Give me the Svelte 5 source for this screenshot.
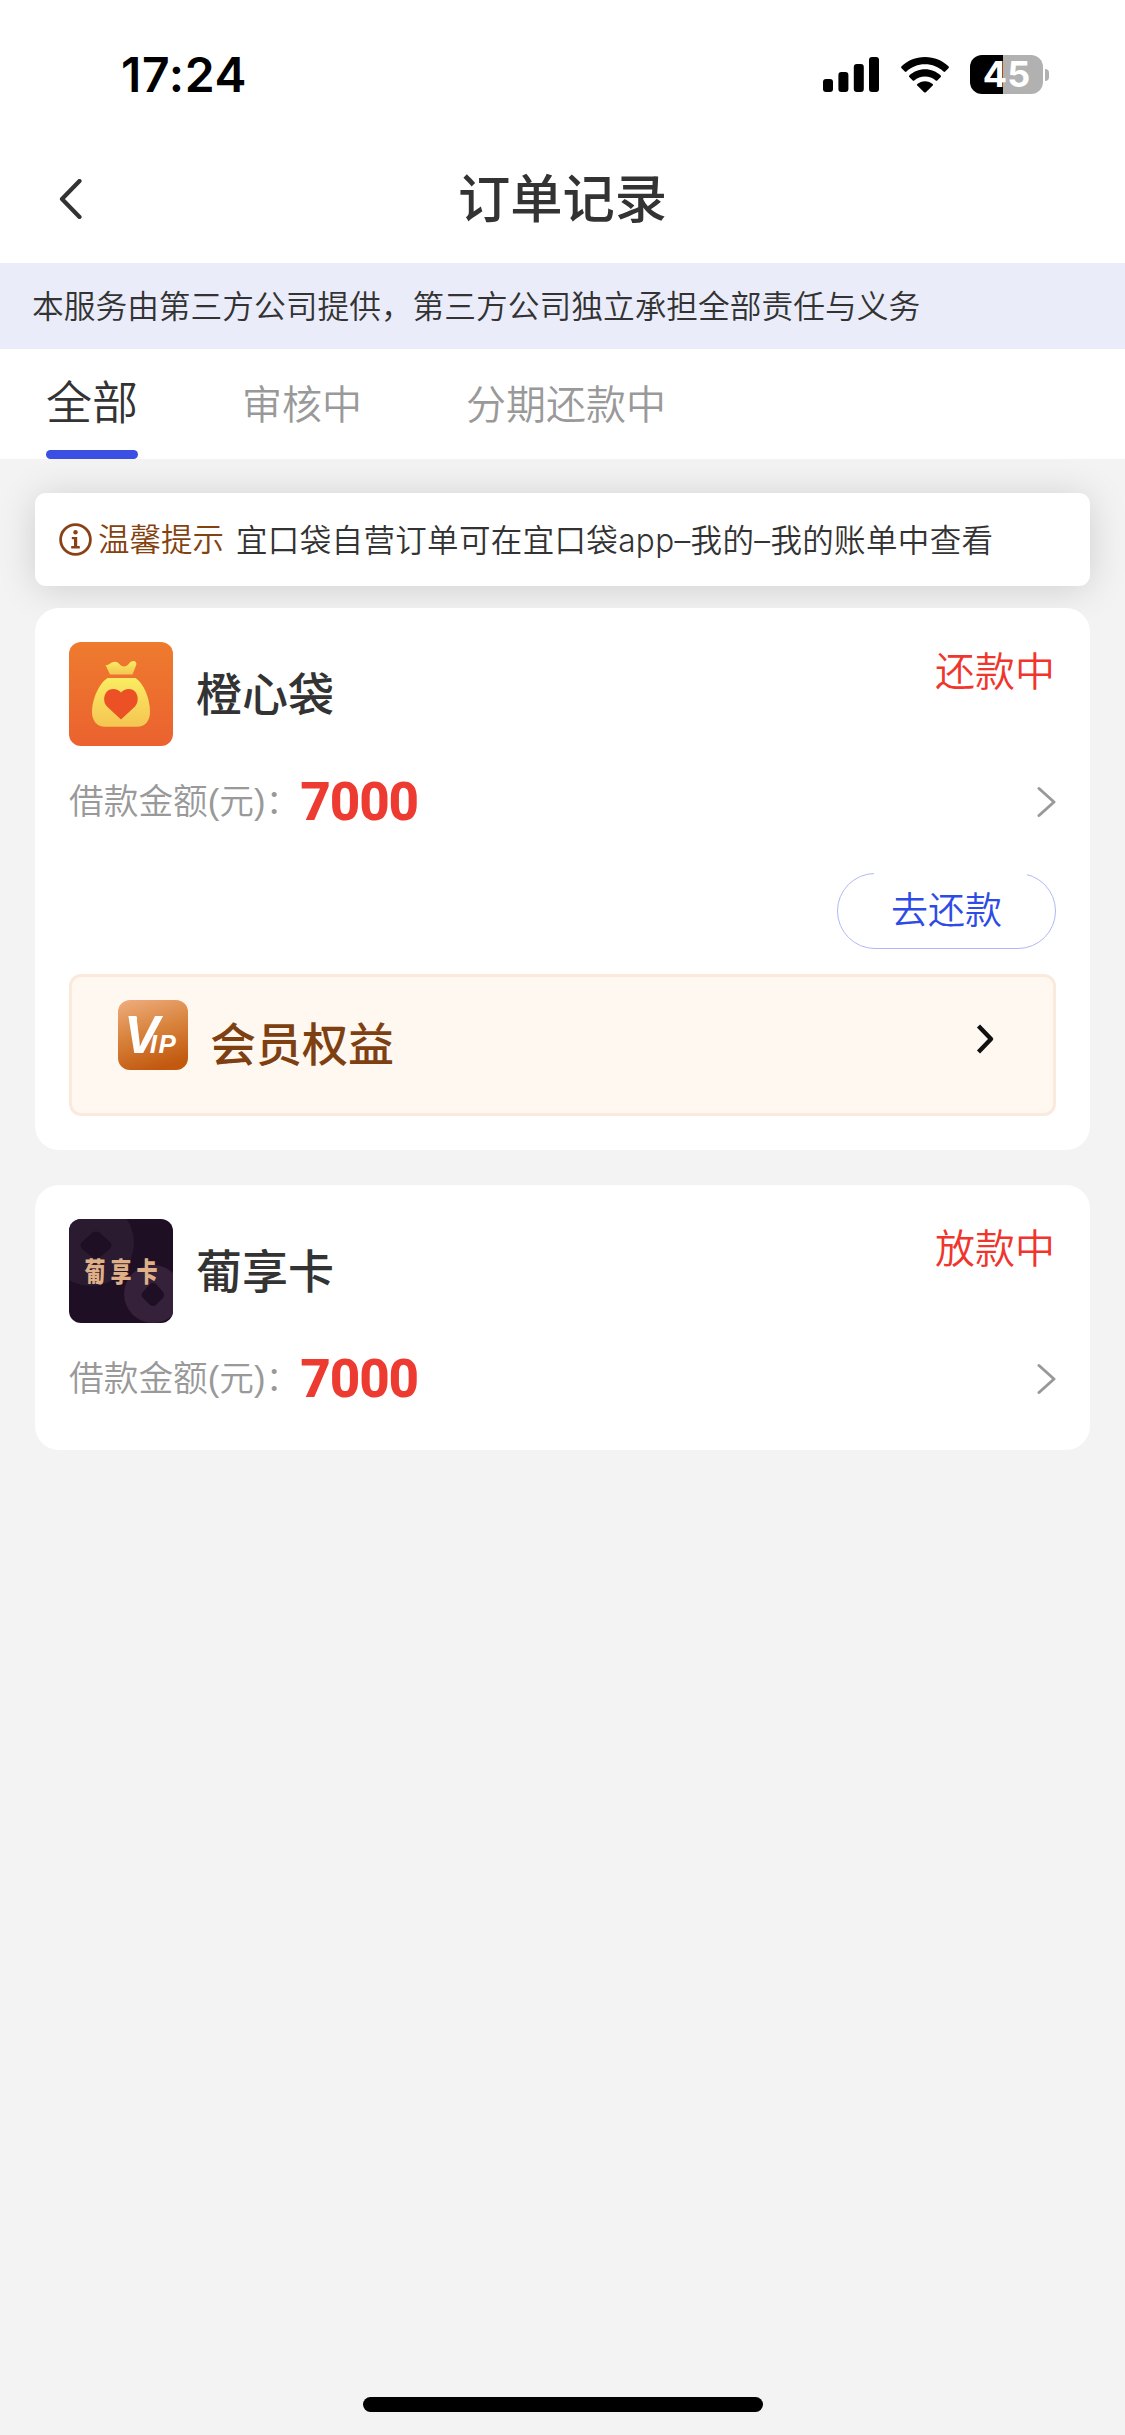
<script>
  let tabs = ['全部', '审核中', '分期还款中'];
  let activeTab = 0;

  let orders = [
    { name: '橙心袋', logo: 'bag', status: '还款中', amount: 7000, canRepay: true },
    { name: '葡享卡', logo: 'card', status: '放款中', amount: 7000, canRepay: false }
  ];
</script>

<div class="page">
  <div class="status-bar">
    <span class="time">17:24</span>
    <div class="status-icons">
      <svg class="signal" width="56" height="35" viewBox="0 0 56 35">
        <rect x="0" y="22" width="10" height="13" rx="3" />
        <rect x="15.4" y="15" width="10" height="20" rx="3" />
        <rect x="30.8" y="7" width="10" height="28" rx="3" />
        <rect x="46" y="0" width="10" height="35" rx="3" />
      </svg>
      <svg class="wifi" width="48" height="36" viewBox="0 0 48 36">
        <path d="M24 0C33.500 0 41.500 3.600 47.400 9.300Q48.400 10.300 47.400 11.300L44.200 14.500Q43.400 15.300 42.500 14.500C37.600 9.900 31.200 7.300 24 7.300S10.400 9.900 5.500 14.500Q4.600 15.300 3.800 14.500L.6 11.300Q-.4 10.300 .6 9.300C6.500 3.600 14.500 0 24 0Z" />
        <path d="M24 12.300C30.200 12.300 35.600 14.700 39.700 18.500Q40.500 19.300 39.700 20.100L36.300 23.500Q35.500 24.200 34.700 23.500C31.800 20.900 28.200 19.400 24 19.400S16.200 20.900 13.300 23.500Q12.500 24.200 11.700 23.500L8.300 20.100Q7.500 19.300 8.300 18.500C12.400 14.700 17.800 12.300 24 12.300Z" />
        <path d="M24 24.200C27 24.200 29.600 25.300 31.700 27Q32.500 27.700 31.700 28.500L24.900 35.200Q24 36 23.100 35.200L16.300 28.500Q15.500 27.700 16.300 27C18.400 25.300 21 24.200 24 24.200Z" />
      </svg>
      <div class="battery">
        <span>45</span>
      </div>
      <div class="battery-cap"></div>
    </div>
  </div>

  <header class="nav">
    <button class="back" aria-label="返回">
      <svg width="24" height="40" viewBox="0 0 24 40">
        <path d="M20.500 2L3 20L20.500 38" fill="none" stroke="#333" stroke-width="4.200" stroke-linecap="round" stroke-linejoin="round" />
      </svg>
    </button>
    <h1>订单记录</h1>
  </header>

  <div class="notice">本服务由第三方公司提供，第三方公司独立承担全部责任与义务</div>

  <nav class="tabs">
    {#each tabs as tab, i}
      <button class="tab" class:active={i === activeTab} on:click={() => (activeTab = i)}>{tab}</button>
    {/each}
  </nav>

  <main>
    <div class="tips">
      <svg width="33" height="33" viewBox="0 0 33 33">
        <circle cx="16.500" cy="16.500" r="14.900" fill="none" stroke="#8a4116" stroke-width="2.800" />
        <circle cx="16.500" cy="9.200" r="2.200" fill="#8a4116" />
        <path d="M12.800 14H18.200V23H20.800V25.400H12.200V23H15V16.200H12.800Z" fill="#8a4116" />
      </svg>
      <span class="tips-title">温馨提示</span>
      <span class="tips-text">宜口袋自营订单可在宜口袋app–我的–我的账单中查看</span>
    </div>

    {#each orders as order}
      <section class="card">
        <div class="card-head">
          {#if order.logo === 'bag'}
            <svg class="logo" width="104" height="104" viewBox="0 0 104 104">
              <defs>
                <linearGradient id="bagBg" x1="0" y1="0" x2="0" y2="1">
                  <stop offset="0" stop-color="#ee7b2e" />
                  <stop offset="1" stop-color="#eb622f" />
                </linearGradient>
                <linearGradient id="bagFill" x1="0" y1="0" x2="0" y2="1">
                  <stop offset="0" stop-color="#faec62" />
                  <stop offset="1" stop-color="#f4c552" />
                </linearGradient>
              </defs>
              <rect width="104" height="104" fill="url(#bagBg)" />
              <path d="M36.500 23C40 24 41.500 19.800 46 19.800C50 19.800 51 24.500 55 24.500C59.500 24.500 60 19 64.500 19C67 19 68 21.500 67 23.500L63.500 32.500H41Z" fill="url(#bagFill)" />
              <path d="M38.500 36H66.500C75 41.500 81 57 81 70C81 79 76 84.700 68 84.700H36C28 84.700 23 79 23 70C23 57 30 41.500 38.500 36Z" fill="url(#bagFill)" />
              <path d="M52 77.500L38 64.500C32.500 58.500 35.500 47 44 47C47.500 47 50.500 48.600 52 50.500C53.500 48.600 56.500 47 60 47C68.500 47 71.500 58.500 66 64.500Z" fill="#ec5125" />
            </svg>
          {:else}
            <svg class="logo" width="104" height="104" viewBox="0 0 104 104">
              <rect width="104" height="104" fill="#1e0f25" />
              <circle cx="22" cy="24" r="43" fill="#2b1b31" />
              <circle cx="84" cy="75" r="29" fill="#35213a" />
              <path d="M23 14Q27 11 31 14L41 23Q44 26 41 30L31 38Q27 41 23 38L13 30Q10 26 13 23Z" fill="#1e0f25" />
              <path d="M81 65Q84 63 87 65L94 73Q96 76 94 79L87 86Q84 88 81 86L74 79Q71 76 74 73Z" fill="#1e0f25" />
              <g transform="scale(1 1.320)">
                <text class="logo-text" x="15.500" y="47.500" textLength="73">葡享卡</text>
              </g>
            </svg>
          {/if}
          <h2>{order.name}</h2>
          <span class="status">{order.status}</span>
        </div>

        <div class="amount-row">
          <span class="label">借款金额(元)：</span>
          <span class="amount">{order.amount}</span>
          <svg class="arrow" width="20" height="32" viewBox="0 0 20 32">
            <path d="M3 2.500L18 16L3 29.500" fill="none" stroke="#999" stroke-width="3" stroke-linecap="round" stroke-linejoin="round" />
          </svg>
        </div>

        {#if order.canRepay}
          <button class="repay">去还款</button>
          <div class="vip">
            <svg class="vip-icon" width="70" height="70" viewBox="0 0 70 70">
              <defs>
                <linearGradient id="vipBg" x1="0.200" y1="0" x2="0.500" y2="1">
                  <stop offset="0" stop-color="#eda978" />
                  <stop offset="0.450" stop-color="#d9853f" />
                  <stop offset="1" stop-color="#c2590f" />
                </linearGradient>
              </defs>
              <rect width="70" height="70" rx="12" fill="url(#vipBg)" />
              <rect x="11" y="17" width="8" height="3" fill="#fff" />
              <text class="vip-mark" x="6" y="53.300">V<tspan class="vip-small" dx="-9.500">IP</tspan></text>
            </svg>
            <span class="vip-title">会员权益</span>
            <svg class="vip-arrow" width="20" height="32" viewBox="0 0 20 32">
              <path d="M3.500 3L16 16L3.500 29" fill="none" stroke="#111" stroke-width="4.400" stroke-linejoin="round" />
            </svg>
          </div>
        {/if}
      </section>
    {/each}
  </main>

  <div class="home-bar"></div>
</div>

<style>
  :global(body) {
    margin: 0;
    background: #f3f3f3;
  }

  .page {
    display: flex;
    flex-direction: column;
    width: 1125px;
    height: 2435px;
    background: #f3f3f3;
    color: #333;
    font-family: "Liberation Sans", "Noto Sans CJK SC", sans-serif;
    font-weight: 350;
    line-height: 1;
    overflow: hidden;
  }

  button {
    border: none;
    background: none;
    padding: 0;
    font-family: inherit;
    font-weight: inherit;
    cursor: pointer;
  }

  h1,
  h2 {
    margin: 0;
    font-weight: 500;
  }

  .status-bar {
    display: flex;
    align-items: center;
    justify-content: space-between;
    box-sizing: border-box;
    height: 138px;
    padding: 11px 76px 0 121px;
    background: #fff;
    color: #000;
  }

  .time {
    font-family: Inter, sans-serif;
    font-size: 48px;
    font-weight: 600;
    letter-spacing: 0.7px;
  }

  .status-icons {
    display: flex;
    align-items: center;
  }

  .wifi {
    margin: 0 21px 0 22px;
  }

  .battery {
    width: 73px;
    height: 39px;
    border-radius: 12px;
    background: linear-gradient(90deg, #000 33px, #b1b1b1 33px);
    color: #fff;
    font-family: Inter, sans-serif;
    font-size: 36px;
    font-weight: 700;
    line-height: 39px;
    text-align: center;
  }

  .battery-cap {
    width: 4px;
    height: 12px;
    margin-left: 2px;
    border-radius: 0 6px 6px 0;
    background: #b1b1b1;
  }

  .nav {
    display: grid;
    grid-template-columns: 100px 1fr 100px;
    align-items: center;
    height: 125px;
    background: #fff;
  }

  .back {
    display: flex;
    padding: 0 0 3px 59px;
  }

  h1 {
    font-size: 52.3px;
    text-align: center;
  }

  .notice {
    height: 84px;
    padding: 2px 0 0 32px;
    background: #eaecf9;
    font-size: 31.72px;
    line-height: 84px;
    white-space: nowrap;
  }

  .tabs {
    display: flex;
    gap: 104px;
    height: 110px;
    padding-left: 46px;
    background: #fff;
  }

  .tab {
    padding-top: 2px;
    color: #999;
    font-size: 40px;
    line-height: 108px;
  }

  .tab.active {
    padding-top: 0;
    color: #333;
    font-size: 46px;
  }

  .tab.active::after {
    content: '';
    display: block;
    height: 9px;
    margin-top: -7px;
    border-radius: 5px;
    background: #3b50e2;
  }

  main {
    flex: 1;
    padding: 34px 35px 0;
  }

  .tips {
    display: flex;
    align-items: center;
    height: 93px;
    margin-bottom: 22px;
    padding-left: 24px;
    border-radius: 11px;
    background: #fff;
    box-shadow: 0 3px 38px rgba(0, 0, 0, 0.15);
    font-size: 31.5px;
    white-space: nowrap;
  }

  .tips-title {
    margin: 2px 0 0 6px;
    color: #84420f;
  }

  .tips-text {
    margin: 2px 0 0 12px;
    font-family: Inter, "Noto Sans CJK SC", sans-serif;
    letter-spacing: 0.35px;
  }

  .card {
    display: flex;
    flex-direction: column;
    margin-bottom: 35px;
    padding: 34px;
    border-radius: 24px;
    background: #fff;
  }

  /* keeps the tips shadow behind the first card */
  .tips + .card {
    position: relative;
  }

  .card-head {
    display: flex;
    align-items: center;
    height: 104px;
  }

  .logo {
    border-radius: 12px;
  }

  .logo-text {
    fill: #dfb088;
    font-family: "Noto Sans CJK SC", sans-serif;
    font-size: 21px;
    font-weight: 900;
  }

  h2 {
    margin: 2px 0 0 23px;
    font-size: 46px;
  }

  .status {
    align-self: flex-start;
    margin: 0 1px 0 auto;
    color: #f0352d;
    font-size: 40px;
    line-height: 61px;
  }

  .amount-row {
    display: flex;
    align-items: center;
    height: 74px;
    margin-top: 19px;
  }

  .label {
    color: #999;
    font-size: 34.7px;
  }

  .amount {
    color: #ed3b31;
    font-family: Roboto, sans-serif;
    font-size: 53px;
    font-weight: 800;
    letter-spacing: -1.1px;
  }

  .arrow {
    margin-left: auto;
  }

  .repay {
    position: relative;
    align-self: flex-end;
    box-sizing: border-box;
    width: 219px;
    height: 76px;
    margin-top: 34px;
    padding-bottom: 6px;
    border: 1px solid #b0b8f6;
    border-radius: 38px;
    color: #2f4be6;
    font-size: 37px;
  }

  .repay::before {
    content: '';
    position: absolute;
    top: -1px;
    left: 36px;
    right: 28px;
    height: 3px;
    background: #fff;
  }

  .vip {
    display: flex;
    align-items: center;
    box-sizing: border-box;
    height: 142px;
    margin-top: 25px;
    padding: 0 58px 0 46px;
    border: 3px solid #fce9dd;
    border-radius: 12px;
    background: #fef8f1;
  }

  .vip-icon {
    margin-bottom: 21px;
  }

  .vip-mark {
    fill: #fff;
    font-family: "Liberation Sans", sans-serif;
    font-size: 53px;
    font-style: italic;
    font-weight: 700;
  }

  .vip-small {
    font-size: 26px;
    letter-spacing: 1.5px;
  }

  .vip-title {
    margin-left: 22px;
    color: #7e4011;
    font-size: 46px;
    font-weight: 500;
  }

  .vip-arrow {
    margin: 0 0 13px auto;
  }

  .home-bar {
    width: 400px;
    height: 15px;
    margin: 0 auto 23px;
    border-radius: 8px;
    background: #000;
  }
</style>
